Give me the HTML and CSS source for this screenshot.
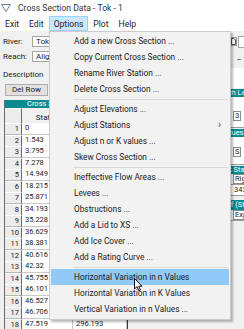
FILE: index.html
```html
<!DOCTYPE html>
<html lang="en">
<head>
    <meta charset="UTF-8">
    <title>Cross Section Data - Tok - 1</title>
    <link rel="stylesheet" href="styles.css">
</head>
<body>
    <div class="titlebar">
        <svg class="app-icon" width="10" height="8" viewBox="0 0 10 8">
            <path d="M0.5 0.5 H9.5 L5 7.5 Z" fill="none" stroke="#6d7f99" stroke-width="1"/>
        </svg>
        <span>Cross Section Data - Tok - 1</span>
    </div>
    <div class="menubar">
        <span>Exit</span>
        <span>Edit</span>
        <span class="active">Options</span>
        <span>Plot</span>
        <span>Help</span>
    </div>

    <div class="main">
        <div class="field">
            <label>River:</label>
            <div class="input">Tok</div>
            <div class="tool-btn">
                <svg width="5" height="7" viewBox="0 0 5 7"><path d="M0.5 0.5 H3 L4.5 2 V6.5 H0.5 Z" fill="#fff" stroke="#555"/></svg>
            </div>
            <div class="input small"></div>
        </div>
        <div class="field">
            <label>Reach:</label>
            <div class="input">Aligned</div>
            <div class="dash"></div>
        </div>

        <div class="columns">
            <div class="left">
                <div class="desc">Description</div>
                <div class="btn">Del Row</div>

                <div class="grid">
                    <div class="grid-title">Cross Section Coordinates</div>
                    <div class="grid-row head">
                        <div class="num"></div>
                        <div class="cell">Station</div>
                        <div class="cell">Elevation</div>
                    </div>
                    <div class="grid-row"><div class="num">1</div><div class="cell">0</div><div class="cell"></div></div>
                    <div class="grid-row"><div class="num">2</div><div class="cell">1.543</div><div class="cell"></div></div>
                    <div class="grid-row"><div class="num">3</div><div class="cell">3.795</div><div class="cell"></div></div>
                    <div class="grid-row"><div class="num">4</div><div class="cell">7.278</div><div class="cell"></div></div>
                    <div class="grid-row"><div class="num">5</div><div class="cell">14.949</div><div class="cell"></div></div>
                    <div class="grid-row"><div class="num">6</div><div class="cell">18.215</div><div class="cell"></div></div>
                    <div class="grid-row"><div class="num">7</div><div class="cell">25.871</div><div class="cell"></div></div>
                    <div class="grid-row"><div class="num">8</div><div class="cell">34.193</div><div class="cell"></div></div>
                    <div class="grid-row"><div class="num">9</div><div class="cell">35.228</div><div class="cell"></div></div>
                    <div class="grid-row"><div class="num">10</div><div class="cell">36.629</div><div class="cell"></div></div>
                    <div class="grid-row"><div class="num">11</div><div class="cell">38.381</div><div class="cell"></div></div>
                    <div class="grid-row"><div class="num">12</div><div class="cell">40.616</div><div class="cell"></div></div>
                    <div class="grid-row"><div class="num">13</div><div class="cell">42.32</div><div class="cell"></div></div>
                    <div class="grid-row"><div class="num">14</div><div class="cell">45.755</div><div class="cell"></div></div>
                    <div class="grid-row"><div class="num">15</div><div class="cell">46.101</div><div class="cell"></div></div>
                    <div class="grid-row"><div class="num">16</div><div class="cell">46.527</div><div class="cell"></div></div>
                    <div class="grid-row"><div class="num">17</div><div class="cell">46.706</div><div class="cell"></div></div>
                    <div class="grid-row"><div class="num">18</div><div class="cell">47.519</div><div class="cell">296.193</div></div>
                </div>
            </div>

            <div class="right">
                <div class="panel-blank"></div>
                <div class="band">Reach Lengths</div>
                <div class="cells tall"><span class="val">3</span></div>
                <div class="band">n Values</div>
                <div class="cells mid"><span class="val">S</span></div>
                <div class="band">Bank Sta</div>
                <div class="cells"><span class="val">Right</span></div>
                <div class="cells"><span class="val plain">343</span></div>
                <div class="band gap">Coeff (Steady)</div>
                <div class="cells"><span class="val">Expansion</span></div>
            </div>
        </div>
    </div>

    <div class="dropdown">
        <div class="item">Add a new Cross Section ...</div>
        <div class="item">Copy Current Cross Section ...</div>
        <div class="item">Rename River Station ...</div>
        <div class="item">Delete Cross Section ...</div>
        <div class="sep"></div>
        <div class="item">Adjust Elevations ...</div>
        <div class="item">Adjust Stations <span class="arrow">&#8250;</span></div>
        <div class="item">Adjust n or K values ...</div>
        <div class="item">Skew Cross Section ...</div>
        <div class="sep"></div>
        <div class="item">Ineffective Flow Areas ...</div>
        <div class="item">Levees ...</div>
        <div class="item">Obstructions ...</div>
        <div class="item">Add a Lid to XS ...</div>
        <div class="item">Add Ice Cover ...</div>
        <div class="item">Add a Rating Curve ...</div>
        <div class="sep"></div>
        <div class="item hover">Horizontal Variation in n Values</div>
        <div class="item">Horizontal Variation in K Values</div>
        <div class="item">Vertical Variation in n Values ...</div>
    </div>

    <svg class="cursor" width="9" height="14" viewBox="0 0 9 14">
        <path d="M0.5 0.5 V11 L3 8.6 L4.8 12.8 L6.4 12.1 L4.7 8.2 H8 Z" fill="#fff" stroke="#111" stroke-width="1" stroke-linejoin="round"/>
    </svg>
</body>
</html>
```

FILE: styles.css
```css
* {
    box-sizing: border-box;
}
body {
    margin: 0;
    width: 244px;
    height: 329px;
    overflow: hidden;
    position: relative;
    background: #f0f0f0;
    color: #1b1b1b;
    font-family: Roboto, "Liberation Sans", sans-serif;
    font-size: 8.3px;
}

/* window chrome */
.titlebar {
    height: 16px;
    background: #fff;
    display: flex;
    align-items: center;
    gap: 7px;
    padding-left: 1px;
    color: #333;
    font-size: 8.6px;
}
.menubar {
    height: 15px;
    background: #fff;
    display: flex;
    font-size: 8.6px;
}
.menubar span {
    display: flex;
    align-items: center;
    padding: 0 4px;
    border: 1px solid transparent;
}
.menubar .active {
    background: #cce8ff;
    border-color: #99d1ff;
}

/* form area behind the menu */
.main {
    padding: 5px 0 0 3px;
    height: 298px;
    overflow: hidden;
}
.field {
    display: flex;
    align-items: center;
    height: 11px;
    margin-bottom: 4px;
}
.field label {
    width: 29px;
    flex: none;
    font-size: 8px;
}
.input {
    width: 197px;
    flex: none;
    height: 11px;
    background: #fff;
    border: 1px solid #a5a5a5;
    font-size: 8px;
    line-height: 9px;
    padding-left: 3px;
}
.input.small {
    width: 20px;
    height: 12px;
    margin-left: 1px;
}
.tool-btn {
    width: 7px;
    height: 9px;
    flex: none;
    margin-left: 1px;
    display: flex;
    align-items: center;
    justify-content: center;
    background: #e6e6e6;
    border: 1px solid #9a9a9a;
}
.dash {
    width: 4px;
    height: 1px;
    flex: none;
    margin: 6px 0 0 8px;
    background: #777;
}

.columns {
    display: grid;
    grid-template-columns: 185px 90px;
}
.left {
    display: flex;
    flex-direction: column;
    min-width: 0;
}
.desc {
    font-size: 8px;
    margin-top: 4px;
    height: 10px;
}
.btn {
    width: 43px;
    height: 12px;
    margin: 4px 0 0 2px;
    background: #e1e1e1;
    border: 1px solid #adadad;
    font-size: 8px;
    line-height: 10px;
    text-align: center;
}

/* data grid */
.grid {
    width: 124px;
    margin: 4px 0 0 1px;
    border-left: 1px solid #6a6a6a;
    border-right: 1px solid #3a3a3a;
    font-size: 7.5px;
}
.grid-title {
    height: 8px;
    background: #0b8a92;
    color: #fff;
    font-size: 7.5px;
    line-height: 8px;
    padding-left: 22px;
    white-space: nowrap;
    overflow: hidden;
}
.grid-row {
    display: grid;
    grid-template-columns: 17px 51px 1fr;
    height: 11.5px;
}
.grid-row.head {
    height: 15px;
}
.grid-row.head .cell {
    background: #f0f0f0;
    text-align: center;
    padding-top: 5px;
    font-size: 8px;
}
.num {
    background: #ececec;
    border-top: 1px solid #fff;
    border-bottom: 1px solid #b8b8b8;
    border-right: 1px solid #6a6a6a;
    text-align: right;
    padding-right: 2px;
    line-height: 10px;
}
.cell {
    background: #fff;
    border-right: 1px solid #c8c8c8;
    border-bottom: 1px solid #c8c8c8;
    padding-left: 3px;
    line-height: 10px;
    white-space: nowrap;
}

/* right hand panel, mostly hidden */
.right {
    display: flex;
    flex-direction: column;
    font-size: 7.5px;
}
.panel-blank {
    height: 20px;
    margin-top: 2px;
    background: #fff;
}
.band {
    height: 8px;
    margin-top: 1px;
    background: #0b8a92;
    color: #fff;
    line-height: 8px;
    white-space: nowrap;
    padding-left: 27px;
}
.band.gap {
    height: 10px;
    line-height: 10px;
    margin-top: 4px;
}
.cells {
    height: 11px;
    background: #fff;
    border: 1px solid #9c9c9c;
    border-top: none;
    padding-left: 44px;
    white-space: nowrap;
}
.cells.tall {
    height: 31px;
    padding-top: 14px;
}
.cells.mid {
    height: 28px;
    padding-top: 10px;
}
.val {
    display: inline-block;
    border: 1px solid #8a8a8a;
    background: #fff;
    padding: 0 1px;
    line-height: 8px;
}
.val.plain {
    border: none;
}

/* the open Options menu */
.dropdown {
    position: absolute;
    left: 49px;
    top: 31px;
    width: 182px;
    padding: 1px 0 2px;
    background: #f2f2f2;
    border: 1px solid #cccccc;
    box-shadow: 2px 2px 2px rgba(0, 0, 0, 0.28);
    color: #1a1a1a;
}
.item {
    position: relative;
    height: 16px;
    line-height: 16px;
    margin: 0 1px;
    padding-left: 23px;
    white-space: nowrap;
}
.item.hover {
    background: #91c9f7;
}
.arrow {
    position: absolute;
    right: 8px;
    top: 0;
    font-size: 10px;
    color: #444;
}
.sep {
    height: 4px;
    margin-left: 23px;
    margin-right: 2px;
    border-top: 2px solid transparent;
}
.sep::after {
    content: "";
    display: block;
    height: 1px;
    background: #d7d7d7;
}

.cursor {
    position: absolute;
    left: 134px;
    top: 278px;
}
```
